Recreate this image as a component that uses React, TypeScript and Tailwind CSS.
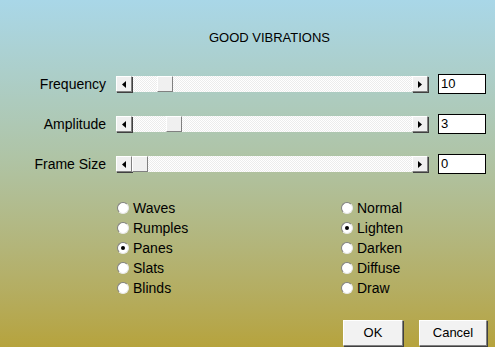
import React from "react";

const font = { fontFamily: '"Liberation Sans", Arial, sans-serif' };

const Arrow = ({ dir }: { dir: "left" | "right" }) => (
  <div className="w-4 h-4 flex items-center justify-center bg-[#f0f0f0] border border-t-white border-l-white border-r-[#808080] border-b-[#808080] shadow-[1px_1px_0_#404040]">
    <svg width="4" height="7" viewBox="0 0 4 7">
      {dir === "left" ? (
        <polygon points="4,0 4,7 0,3.5" fill="#000" />
      ) : (
        <polygon points="0,0 0,7 4,3.5" fill="#000" />
      )}
    </svg>
  </div>
);

const ScrollRow = ({
  label,
  value,
  thumb,
}: {
  label: string;
  value: string;
  thumb: number;
}) => (
  <div className="flex items-center h-5">
    <div className="w-[106px] text-right text-[14px] text-black">{label}</div>
    <div className="ml-[10px] w-[312px] h-4 flex bg-[repeating-conic-gradient(#ffffff_0_25%,#ececec_0_50%)] bg-size-[2px_2px]">
      <Arrow dir="left" />
      <div className="flex-1 relative">
        {/* thumb */}
        <div
          className="absolute top-0 w-4 h-4 bg-[#f0f0f0] border border-t-white border-l-white border-r-[#808080] border-b-[#808080]"
          style={{ left: thumb }}
        />
      </div>
      <Arrow dir="right" />
    </div>
    <div className="ml-[10px] w-12 h-5 bg-white border border-black text-[13px] leading-[18px] pl-[2px]">
      {value}
    </div>
  </div>
);

const Radio = ({ label, checked }: { label: string; checked?: boolean }) => (
  <div className="flex items-center h-5 text-[14px] text-black">
    <div className="w-3 h-3 rounded-full bg-white border border-t-[#808080] border-l-[#808080] border-r-[#e8e8e8] border-b-[#e8e8e8] flex items-center justify-center">
      {checked && <div className="w-1 h-1 rounded-full bg-black" />}
    </div>
    <span className="ml-[4px]">{label}</span>
  </div>
);

const Btn = ({ children, w }: { children: React.ReactNode; w: string }) => (
  <button
    className={`${w} h-[26px] bg-[#f2f2f2] border border-t-white border-l-white border-r-[#808080] border-b-[#808080] shadow-[1px_1px_0_#404040] text-[13px] text-black`}
  >
    {children}
  </button>
);

export default function App() {
  return (
    <div
      className="w-[495px] h-[347px] overflow-hidden bg-linear-to-b from-[#a9d7e8] via-[#afc4a6] via-45% to-[#b6a33c] flex flex-col"
      style={font}
    >
      {/* title */}
      <div className="pt-[30px] pl-[44px] text-center text-[13px] text-black leading-4">
        GOOD VIBRATIONS
      </div>

      {/* sliders */}
      <div className="mt-[28px] flex flex-col gap-5">
        <ScrollRow label="Frequency" value="10" thumb={25} />
        <ScrollRow label="Amplitude" value="3" thumb={34} />
        <ScrollRow label="Frame Size" value="0" thumb={0} />
      </div>

      {/* options */}
      <div className="mt-[24px] flex pl-[117px]">
        <div className="flex flex-col w-[224px]">
          <Radio label="Waves" />
          <Radio label="Rumples" />
          <Radio label="Panes" checked />
          <Radio label="Slats" />
          <Radio label="Blinds" />
        </div>
        <div className="flex flex-col">
          <Radio label="Normal" />
          <Radio label="Lighten" checked />
          <Radio label="Darken" />
          <Radio label="Diffuse" />
          <Radio label="Draw" />
        </div>
      </div>

      {/* buttons */}
      <div className="mt-auto mb-[1px] flex justify-end gap-[16px] pr-[8px]">
        <Btn w="w-[60px]">OK</Btn>
        <Btn w="w-[68px]">Cancel</Btn>
      </div>
    </div>
  );
}
